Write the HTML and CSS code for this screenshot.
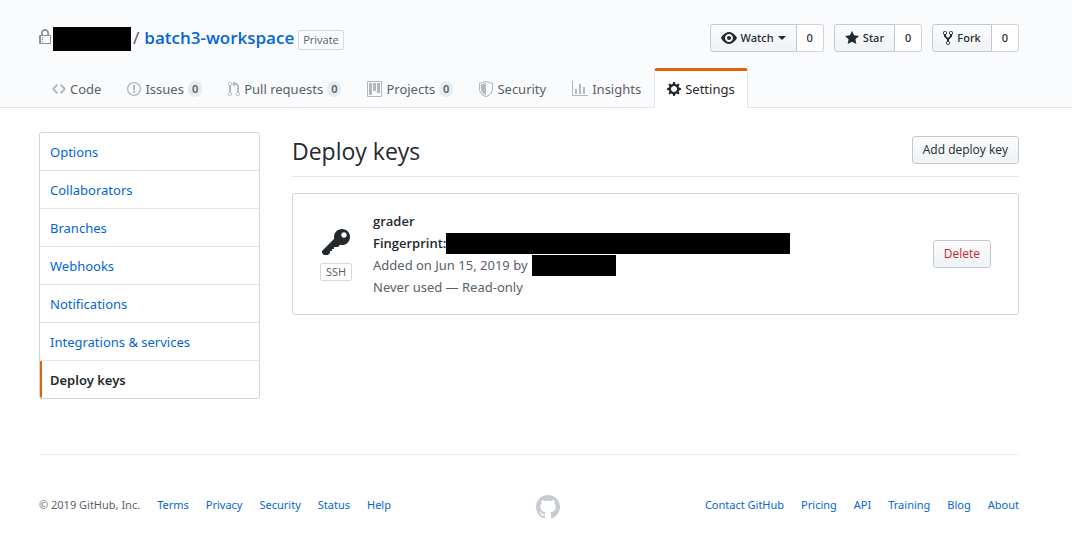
FILE: index.html
```html
<!DOCTYPE html>
<html lang="en">
<head>
<meta charset="utf-8">
<title>Deploy keys</title>
<meta name="viewport" content="width=device-width, initial-scale=1">
<link rel="stylesheet" href="styles.css">
</head>
<body>
<header class="repo-head">
  <div class="repo-top">
    <h1 class="repo-title">
      <svg class="icon lock" width="12" height="16" viewBox="0 0 12 16"><path fill-rule="evenodd" d="M4 13H3v-1h1v1zm8-6v7c0 .55-.45 1-1 1H1c-.55 0-1-.45-1-1V7c0-.55.45-1 1-1h1V4c0-2.2 1.8-4 4-4s4 1.8 4 4v2h1c.55 0 1 .45 1 1zM3.8 6h4.41V4c0-1.22-.98-2.2-2.2-2.2-1.22 0-2.2.98-2.2 2.2v2H3.8zM11 7H2v7h9V7zM4 8H3v1h1V8zm0 2H3v1h1v-1z"/></svg>
      <span class="redacted owner"></span>
      <span class="slash">/</span>
      <a class="repo-name" href="#">batch3-workspace</a>
      <span class="label">Private</span>
    </h1>
    <div class="actions">
      <div class="btn-group">
        <button class="btn" type="button"><svg class="icon" width="16" height="16" viewBox="0 0 16 16"><path fill-rule="evenodd" d="M8.06 2C3 2 0 8 0 8s3 6 8.06 6C13 14 16 8 16 8s-3-6-7.94-6zM8 12c-2.2 0-4-1.78-4-4 0-2.2 1.8-4 4-4 2.22 0 4 1.8 4 4 0 2.22-1.78 4-4 4zm2-4c0 1.11-.89 2-2 2-1.11 0-2-.89-2-2 0-1.11.89-2 2-2 1.11 0 2 .89 2 2z"/></svg>Watch<span class="caret"></span></button>
        <a class="count" href="#">0</a>
      </div>
      <div class="btn-group">
        <button class="btn" type="button"><svg class="icon" width="14" height="16" viewBox="0 0 14 16"><path d="M14 6l-4.9-.64L7 1 4.9 5.36 0 6l3.6 3.26L2.67 14 7 11.67 11.33 14l-.93-4.74L14 6z"/></svg>Star</button>
        <a class="count" href="#">0</a>
      </div>
      <div class="btn-group">
        <button class="btn" type="button"><svg class="icon" width="10" height="16" viewBox="0 0 10 16"><path fill-rule="evenodd" d="M8 1a1.993 1.993 0 0 0-1 3.72V6L5 8 3 6V4.72A1.993 1.993 0 0 0 2 1a1.993 1.993 0 0 0-1 3.72V6.5l3 3v1.78A1.993 1.993 0 0 0 5 15a1.993 1.993 0 0 0 1-3.72V9.5l3-3V4.72A1.993 1.993 0 0 0 8 1zM2 4.2C1.34 4.2.8 3.65.8 3c0-.65.55-1.2 1.2-1.2.65 0 1.2.55 1.2 1.2 0 .65-.55 1.2-1.2 1.2zm3 10c-.66 0-1.2-.55-1.2-1.2 0-.65.55-1.2 1.2-1.2.65 0 1.2.55 1.2 1.2 0 .65-.55 1.2-1.2 1.2zm3-10c-.66 0-1.2-.55-1.2-1.2 0-.65.55-1.2 1.2-1.2.65 0 1.2.55 1.2 1.2 0 .65-.55 1.2-1.2 1.2z"/></svg>Fork</button>
        <a class="count" href="#">0</a>
      </div>
    </div>
  </div>
  <nav class="tabs" aria-label="Repository">
    <a class="tab" href="#"><svg class="icon" width="14" height="16" viewBox="0 0 14 16"><path d="M9.5 3L8 4.5 11.5 8 8 11.5 9.5 13 14 8 9.5 3zm-5 0L0 8l4.5 5L6 11.5 2.5 8 6 4.5 4.5 3z"/></svg>Code</a>
    <a class="tab" href="#"><svg class="icon" width="14" height="16" viewBox="0 0 14 16"><path fill-rule="evenodd" d="M7 2.3c3.14 0 5.7 2.56 5.7 5.7s-2.56 5.7-5.7 5.7A5.71 5.71 0 0 1 1.3 8c0-3.14 2.56-5.7 5.7-5.7zM7 1C3.14 1 0 4.14 0 8s3.14 7 7 7 7-3.14 7-7-3.14-7-7-7zm1 3H6v5h2V4zm0 6H6v2h2v-2z"/></svg>Issues<span class="counter">0</span></a>
    <a class="tab" href="#"><svg class="icon" width="12" height="16" viewBox="0 0 12 16"><path fill-rule="evenodd" d="M11 11.28V5c-.03-.78-.34-1.47-.94-2.06C9.46 2.35 8.78 2.03 8 2H7V0L4 3l3 3V4h1c.27.02.48.11.69.31.21.2.3.42.31.69v6.28A1.993 1.993 0 0 0 10 15a1.993 1.993 0 0 0 1-3.72zm-1 2.92c-.66 0-1.2-.55-1.2-1.2 0-.65.55-1.2 1.2-1.2.65 0 1.2.55 1.2 1.2 0 .65-.55 1.2-1.2 1.2zM4 3c0-1.11-.89-2-2-2a1.993 1.993 0 0 0-1 3.72v6.56A1.993 1.993 0 0 0 2 15a1.993 1.993 0 0 0 1-3.72V4.72c.59-.34 1-.98 1-1.72zm-.8 10c0 .66-.55 1.2-1.2 1.2-.65 0-1.2-.55-1.2-1.2 0-.65.55-1.2 1.2-1.2.65 0 1.2.55 1.2 1.2zM2 4.2C1.34 4.2.8 3.65.8 3c0-.65.55-1.2 1.2-1.2.65 0 1.2.55 1.2 1.2 0 .65-.55 1.2-1.2 1.2z"/></svg>Pull requests<span class="counter">0</span></a>
    <a class="tab" href="#"><svg class="icon" width="15" height="16" viewBox="0 0 15 16"><path fill-rule="evenodd" d="M10 12h3V2h-3v10zm-4-2h3V2H6v8zm-4 4h3V2H2v12zm-1 1h13V1H1v14zM14 0H1a1 1 0 0 0-1 1v14a1 1 0 0 0 1 1h13a1 1 0 0 0 1-1V1a1 1 0 0 0-1-1z"/></svg>Projects<span class="counter">0</span></a>
    <a class="tab" href="#"><svg class="icon" width="14" height="16" viewBox="0 0 14 16"><path fill-rule="evenodd" d="M0 2l7-2 7 2v6.02C14 12.69 8.69 16 7 16c-1.69 0-7-3.31-7-7.98V2zm1 .75L7 1l6 1.75v5.268C13 12.104 8.449 15 7 15c-1.449 0-6-2.896-6-6.982V2.75zm1 .75L7 2v12c-1.207 0-5-2.482-5-5.985V3.5z"/></svg>Security</a>
    <a class="tab" href="#"><svg class="icon" width="16" height="16" viewBox="0 0 16 16"><path d="M16 14v1H0V0h1v14h15zM5 13H3V8h2v5zm4 0H7V3h2v10zm4 0h-2V6h2v7z"/></svg>Insights</a>
    <a class="tab selected" href="#" aria-current="page"><svg class="icon" width="14" height="16" viewBox="0 0 14 16"><path fill-rule="evenodd" d="M14 8.77v-1.6l-1.94-.64-.45-1.09.88-1.84-1.13-1.13-1.81.91-1.09-.45-.69-1.92h-1.6l-.63 1.94-1.11.45-1.84-.88-1.13 1.13.91 1.81-.45 1.09L0 7.23v1.59l1.94.64.45 1.09-.88 1.84 1.13 1.13 1.81-.91 1.09.45.69 1.92h1.59l.63-1.94 1.11-.45 1.84.88 1.13-1.13-.92-1.81.47-1.09L14 8.75v.02zM7 11c-1.66 0-3-1.34-3-3s1.34-3 3-3 3 1.34 3 3-1.34 3-3 3z"/></svg>Settings</a>
  </nav>
</header>
<div class="content">
  <nav class="menu" aria-label="Settings">
    <a class="menu-item" href="#">Options</a>
    <a class="menu-item" href="#">Collaborators</a>
    <a class="menu-item" href="#">Branches</a>
    <a class="menu-item" href="#">Webhooks</a>
    <a class="menu-item" href="#">Notifications</a>
    <a class="menu-item" href="#">Integrations &amp; services</a>
    <a class="menu-item current" href="#" aria-current="page">Deploy keys</a>
  </nav>
  <main class="main">
    <div class="subhead">
      <h2 class="subhead-title">Deploy keys</h2>
      <button class="btn" type="button">Add deploy key</button>
    </div>
    <section class="key-card">
      <div class="key-type">
        <svg class="icon" width="28" height="32" viewBox="0 0 14 16"><path fill-rule="evenodd" d="M12.83 2.17C12.08 1.42 11.14 1.03 10 1c-1.13.03-2.08.42-2.83 1.17S6.04 3.86 6.01 5c0 .3.03.59.09.89L0 12v1l1 1h2l1-1v-1h1v-1h1v-1h2l1.09-1.11c.3.08.59.11.91.11 1.14-.03 2.08-.42 2.83-1.17S13.97 6.14 14 5c-.03-1.14-.42-2.08-1.17-2.83zM11 5.38c-.77 0-1.38-.61-1.38-1.38 0-.77.61-1.38 1.38-1.38.77 0 1.38.61 1.38 1.38 0 .77-.61 1.38-1.38 1.38z"/></svg>
        <span class="label ssh">SSH</span>
      </div>
      <div class="key-info">
        <strong class="line">grader</strong>
        <strong class="line">Fingerprint:<span class="redacted fingerprint"></span></strong>
        <span class="line muted">Added on Jun 15, 2019 by<span class="redacted author"></span></span>
        <span class="line muted">Never used — Read-only</span>
      </div>
      <button class="btn danger" type="button">Delete</button>
    </section>
  </main>
</div>
<footer class="footer">
  <div class="foot-links">
    <span>© 2019 GitHub, Inc.</span>
    <a href="#">Terms</a>
    <a href="#">Privacy</a>
    <a href="#">Security</a>
    <a href="#">Status</a>
    <a href="#">Help</a>
  </div>
  <a class="mark" href="#" aria-label="GitHub"><svg class="icon" width="24" height="24" viewBox="0 0 16 16"><path fill-rule="evenodd" d="M8 0C3.58 0 0 3.58 0 8c0 3.54 2.29 6.53 5.47 7.59.4.07.55-.17.55-.38 0-.19-.01-.82-.01-1.49-2.01.37-2.53-.49-2.69-.94-.09-.23-.48-.94-.82-1.13-.28-.15-.68-.52-.01-.53.63-.01 1.08.58 1.23.82.72 1.21 1.87.87 2.33.66.07-.52.28-.87.51-1.07-1.78-.2-3.64-.89-3.64-3.95 0-.87.31-1.59.82-2.15-.08-.2-.36-1.02.08-2.12 0 0 .67-.21 2.2.82.64-.18 1.32-.27 2-.27.68 0 1.36.09 2 .27 1.53-1.04 2.2-.82 2.2-.82.44 1.1.16 1.92.08 2.12.51.56.82 1.27.82 2.15 0 3.07-1.87 3.75-3.65 3.95.29.25.54.73.54 1.48 0 1.07-.01 1.93-.01 2.2 0 .21.15.46.55.38A8.013 8.013 0 0 0 16 8c0-4.42-3.58-8-8-8z"/></svg></a>
  <div class="foot-links">
    <a href="#">Contact GitHub</a>
    <a href="#">Pricing</a>
    <a href="#">API</a>
    <a href="#">Training</a>
    <a href="#">Blog</a>
    <a href="#">About</a>
  </div>
</footer>
</body>
</html>
```
FILE: styles.css
```css
* { box-sizing: border-box; }

body {
  margin: 0;
  background: #fff;
  color: #24292e;
  font: 13px/22px "Noto Sans", "Open Sans", sans-serif;
}

a { color: #0366d6; text-decoration: none; }

.icon { display: block; flex: none; fill: currentColor; }

.redacted { flex: none; background: #000; }

.repo-head {
  padding: 24px 53px 0 39px;
  background: #fafbfc;
  border-bottom: 1px solid #e1e4e8;
}

.repo-top {
  display: flex;
  justify-content: space-between;
  align-items: flex-start;
}

.repo-title {
  display: flex;
  align-items: center;
  margin: 0;
  font-size: 17px;
  font-weight: 400;
  line-height: 28px;
}

.lock { margin: 0 2px 2px 0; color: #8c9196; }
.owner { width: 78px; height: 24px; margin-top: 2px; }
.slash { margin: 0 5px 0 2px; color: #586069; }
.repo-name { font-family: "Open Sans", "Noto Sans", sans-serif; font-weight: 600; }

.label {
  padding: 0 4px;
  border: 1px solid #d6d9dc;
  border-radius: 2px;
  color: #586069;
  font-family: "Open Sans", "Noto Sans", sans-serif;
  font-size: 11px;
  line-height: 18px;
}

.repo-title .label { margin: 4px 0 0 4px; }

.actions { display: flex; gap: 10px; }
.btn-group { display: flex; }

.btn {
  display: flex;
  align-items: center;
  gap: 4px;
  padding: 3px 10px;
  border: 1px solid #c5c9cd;
  border-radius: 3px;
  background: linear-gradient(#fafbfc, #eff3f6);
  color: #24292e;
  font: 500 12px/20px "Open Sans", "Noto Sans", sans-serif;
  white-space: nowrap;
}

.btn-group .btn {
  border-radius: 3px 0 0 3px;
  font: 500 11px/20px "Noto Sans", "Open Sans", sans-serif;
}

.count {
  padding: 3px 10px;
  border: 1px solid #d1d5da;
  border-left: 0;
  border-radius: 0 3px 3px 0;
  background: #fff;
  color: #24292e;
  font: 500 11px/20px "Noto Sans", "Open Sans", sans-serif;
}

.caret {
  border: 4px solid transparent;
  border-top-color: currentColor;
  border-bottom: 0;
}

.tabs {
  display: flex;
  margin: 16px 0 -1px;
}

.tab {
  display: flex;
  align-items: center;
  gap: 4px;
  padding: 7px 12px 8px;
  border: 1px solid transparent;
  border-top-width: 3px;
  border-bottom: 0;
  color: #586069;
  white-space: nowrap;
}

.tab .icon { color: #b3b8bd; }

.selected {
  border-color: #e36209 #e1e4e8 transparent;
  border-radius: 3px 3px 0 0;
  background: #fff;
  color: #24292e;
}

.tab.selected .icon { color: #24292e; }

.counter {
  padding: 0 4px;
  border-radius: 8px;
  background: #e8eaed;
  font-size: 11px;
  font-weight: 600;
  line-height: 16px;
}

.content {
  display: flex;
  align-items: flex-start;
  gap: 32px;
  padding: 24px 53px 0 39px;
}

.menu {
  flex: none;
  width: 221px;
  border: 1px solid #d1d5da;
  border-radius: 3px;
  overflow: hidden;
}

.menu-item {
  display: block;
  padding: 8px 10px 7px;
  border-bottom: 1px solid #e1e4e8;
}

.menu-item:last-child { border-bottom: 0; }

.current {
  padding-left: 8px;
  border-left: 2px solid #e36209;
  color: #24292e;
  font-weight: 600;
}

.main { flex: 1; min-width: 0; }

.subhead {
  display: flex;
  justify-content: space-between;
  align-items: center;
  padding: 3px 0 11px;
  border-bottom: 1px solid #e1e4e8;
}

.subhead-title {
  margin: 0;
  font-family: "Open Sans", "Noto Sans", sans-serif;
  font-size: 23px;
  font-weight: 400;
  line-height: 32px;
}

.subhead .btn { margin-bottom: 2px; }

.subhead { padding-bottom: 9px; }

.key-card {
  display: flex;
  align-items: center;
  margin-top: 16px;
  padding: 16px 27px 16px 26px;
  border: 1px solid #d1d5da;
  border-radius: 3px;
}

.key-type {
  display: flex;
  flex-direction: column;
  align-items: center;
  gap: 4px;
  width: 34px;
}

.ssh { padding: 0 5px; line-height: 16px; }

.key-info { flex: 1; margin-left: 20px; }

.line {
  display: flex;
  align-items: center;
  font-family: "Open Sans", "Noto Sans", sans-serif;
  font-weight: 600;
}

.muted {
  color: #586069;
  font-family: "Noto Sans", "Open Sans", sans-serif;
  font-weight: 400;
}

.fingerprint { width: 344px; height: 21px; }
.author { width: 84px; height: 21px; margin-left: 4px; }
.danger { color: #cb2431; }

.footer {
  display: flex;
  justify-content: space-between;
  align-items: flex-start;
  margin: 55px 53px 0 39px;
  padding: 40px 0 32px;
  border-top: 1px solid #eaecef;
  color: #586069;
  font-size: 11px;
  line-height: 20px;
}

.foot-links { display: flex; gap: 17px; white-space: nowrap; }
.mark { color: #c6cbd1; }
```
